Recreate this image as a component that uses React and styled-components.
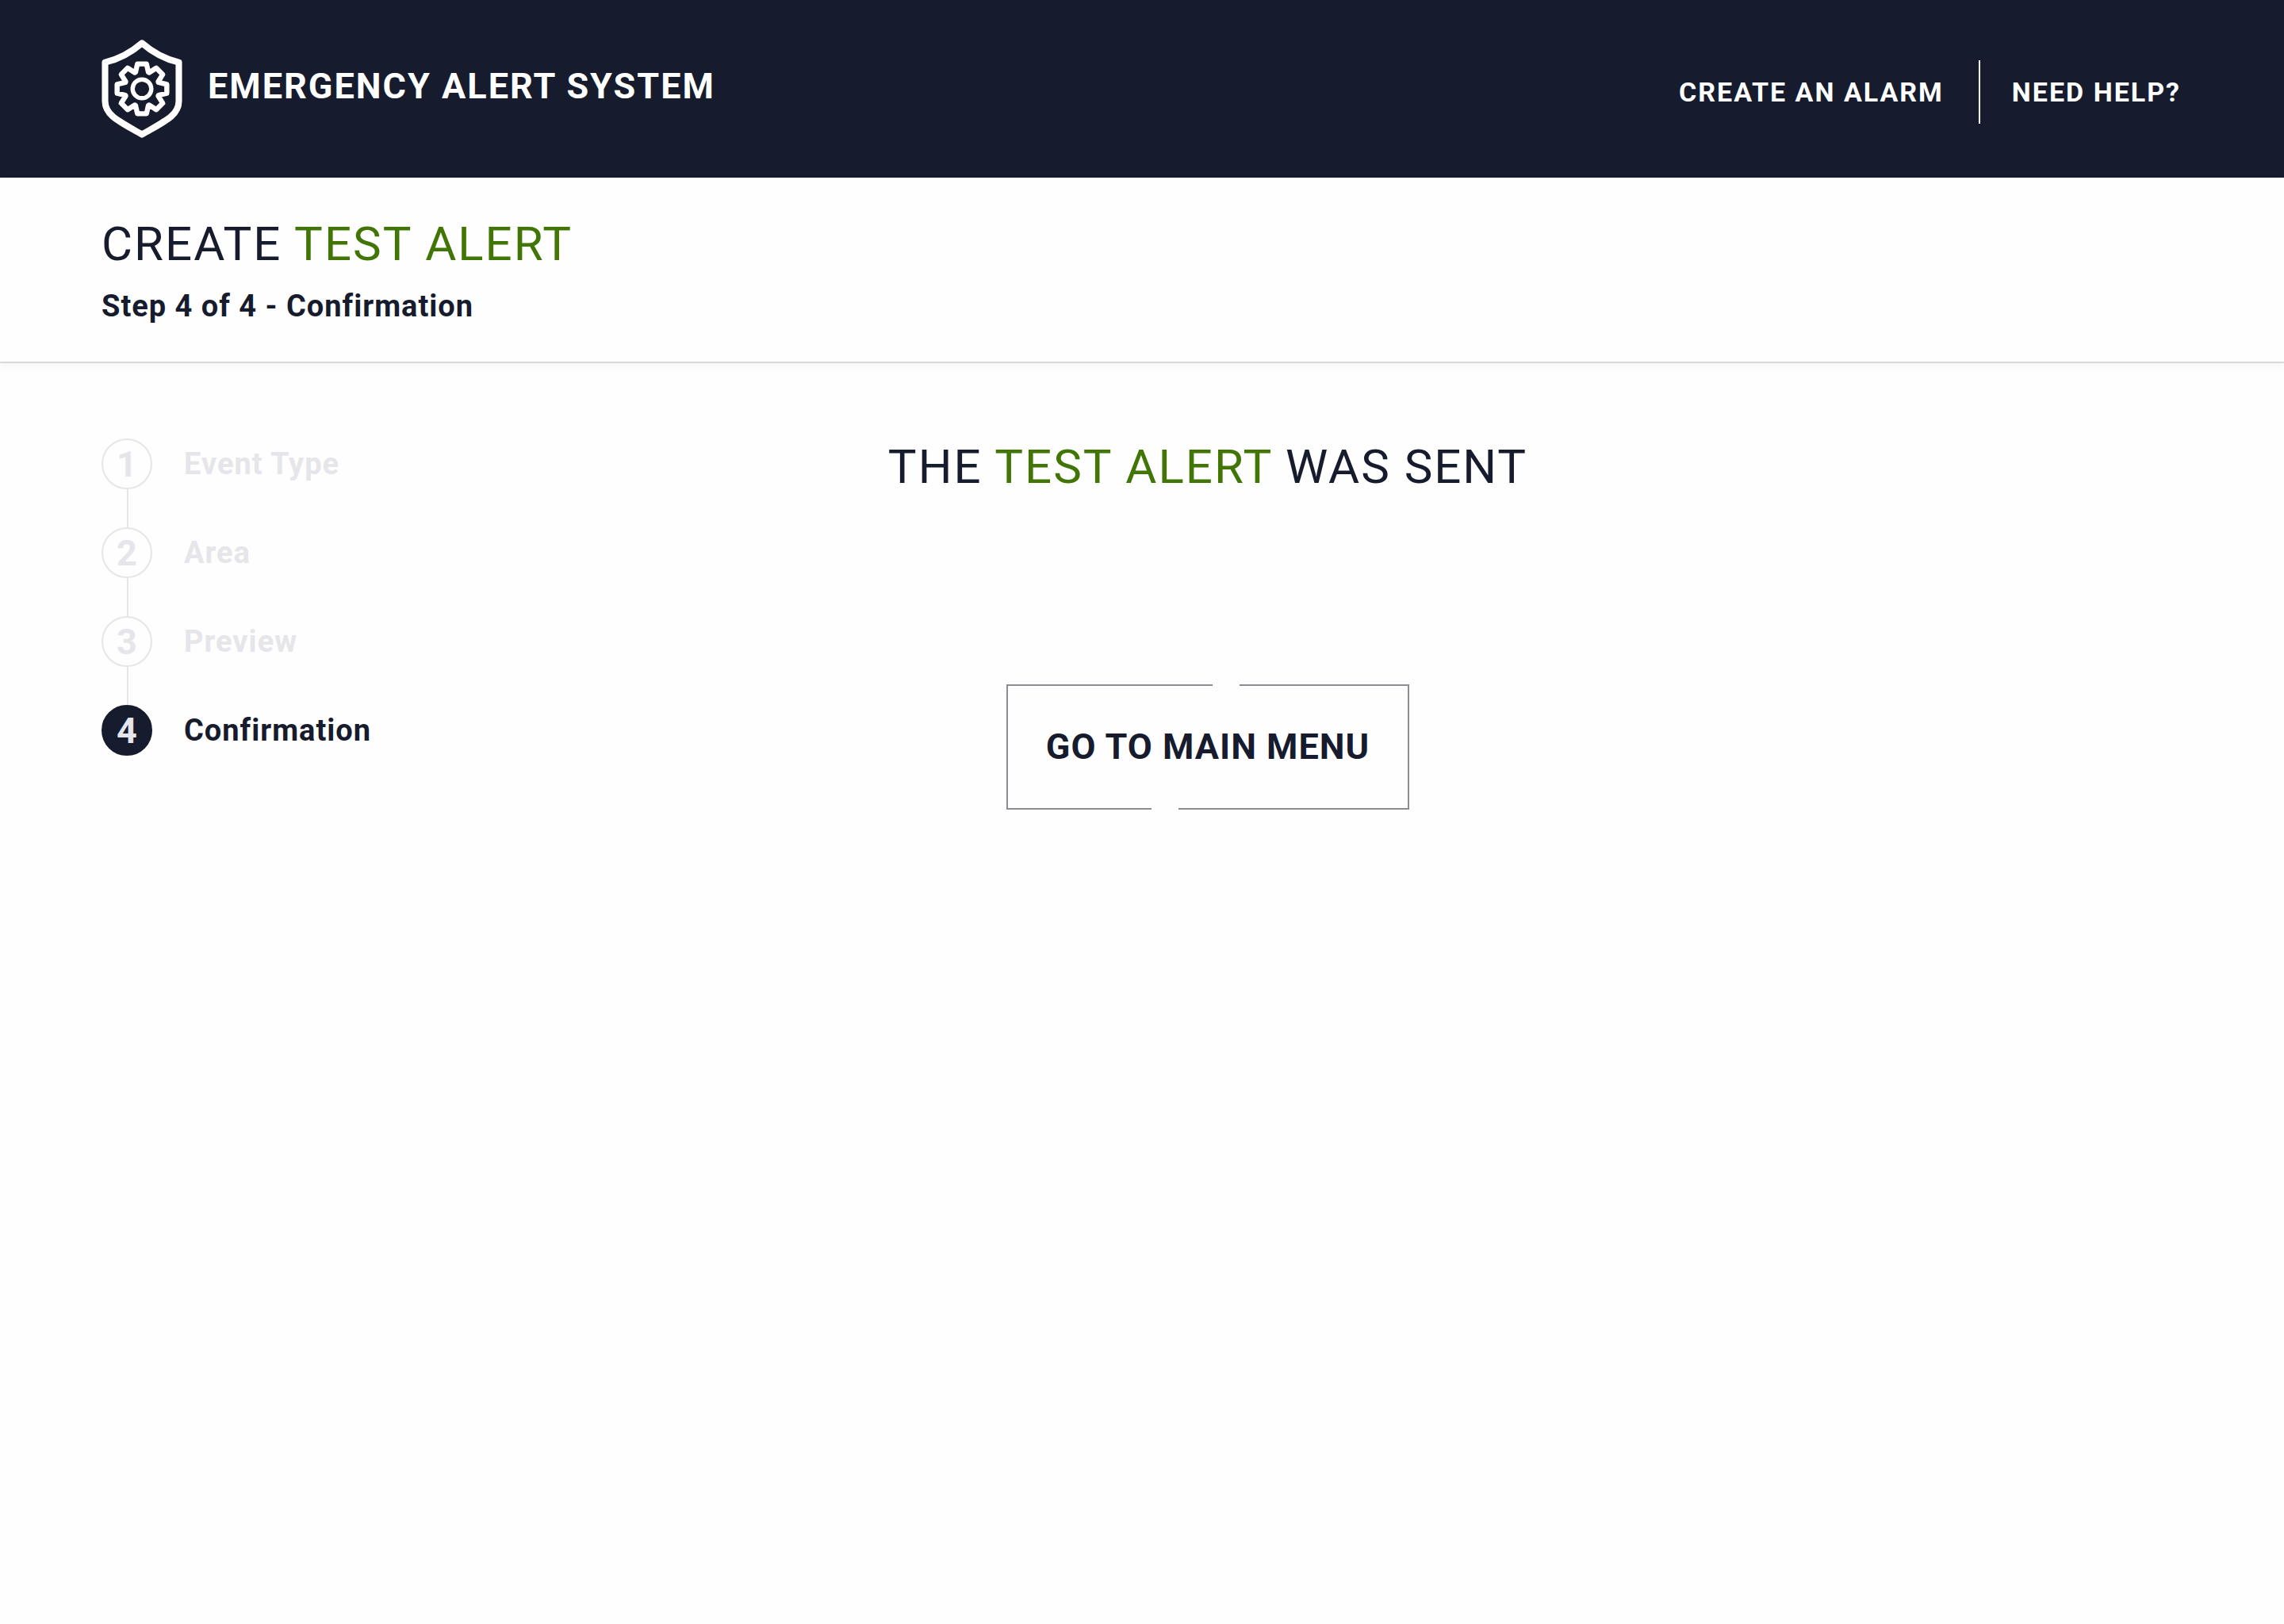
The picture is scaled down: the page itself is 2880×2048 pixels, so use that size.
import React from 'react';
import styled, { createGlobalStyle } from 'styled-components';

const colors = {
    navy: "#161c2d",
    green: "#417505",
    faded: "#e5e5ea",
    rule: "#d8d8d8",
    outline: "#8a8d96"
};

const steps = ["Event Type", "Area", "Preview", "Confirmation"];

// one tooth as [offset from its axis, distance from the centre]
const tooth = [[-24, 62], [-17, 93], [17, 93], [24, 62]];

const gearPoints = [0, 1, 2, 3, 4, 5, 6, 7].flatMap(i => {
    const a = i * Math.PI / 4;
    return tooth.map(([x, r]) => {
        const px = 150 + x * Math.cos(a) + r * Math.sin(a);
        const py = 184 + x * Math.sin(a) - r * Math.cos(a);
        return `${px.toFixed(1)},${py.toFixed(1)}`;
    });
}).join(" ");

const Logo = () => (
    <LogoSvg viewBox="0 0 300 368" aria-hidden="true">
        <path
            d="M150 13 C112 46 68 72 12 85 V230 C12 284 66 306 150 355 C234 306 288 284 288 230 V85 C232 72 188 46 150 13 Z"
            strokeWidth="24"
        />
        <polygon points={gearPoints} strokeWidth="19" />
        <circle cx="150" cy="184" r="35" strokeWidth="16" />
    </LogoSvg>
);

export default class App extends React.Component {
    render() {
        return (
            <Page>
                <GlobalStyle />
                <Header>
                    <Brand>
                        <Logo />
                        <BrandName>EMERGENCY ALERT SYSTEM</BrandName>
                    </Brand>
                    <Nav>
                        <NavLink href="#create">CREATE AN ALARM</NavLink>
                        <NavLink href="#help">NEED HELP?</NavLink>
                    </Nav>
                </Header>
                <TitleBar>
                    <Title>CREATE <Green>TEST ALERT</Green></Title>
                    <Subtitle>Step 4 of 4 - Confirmation</Subtitle>
                </TitleBar>
                <Content>
                    <Steps>
                        {steps.map((name, i) => (
                            <Step key={name} $active={i === 3}>
                                <StepNumber $active={i === 3}>{i + 1}</StepNumber>
                                {name}
                            </Step>
                        ))}
                    </Steps>
                    <Main>
                        <Title as="h2">THE <Green>TEST ALERT</Green> WAS SENT</Title>
                        <MenuButton type="button">GO TO MAIN MENU</MenuButton>
                    </Main>
                </Content>
            </Page>
        );
    }
};

const GlobalStyle = createGlobalStyle`
    * {
        box-sizing: border-box;
    }
    body {
        margin: 0;
        background-color: #fefefe;
        color: ${colors.navy};
        font-family: Roboto, "Liberation Sans", sans-serif;
    }
`;

const Page = styled("div")`
    min-height: 100vh;
`;

const Header = styled("header")`
    background-color: ${colors.navy};
    color: white;
    height: 224px;
    padding: 0 130px 0 128px;
    display: flex;
    justify-content: space-between;
    align-items: center;
`;

const Brand = styled("div")`
    display: flex;
    align-items: center;
    gap: 32px;
`;

const LogoSvg = styled("svg")`
    width: 102px;
    height: 124px;
    fill: none;
    stroke: white;
    stroke-linejoin: round;
`;

const BrandName = styled("span")`
    font-size: 45px;
    line-height: 56px;
    font-weight: 700;
    letter-spacing: 2px;
    padding-bottom: 6px;
`;

const Nav = styled("nav")`
    display: flex;
    padding-top: 8px;
`;

const NavLink = styled("a")`
    color: white;
    text-decoration: none;
    font-size: 34px;
    line-height: 80px;
    font-weight: 700;
    letter-spacing: 2px;

    & + & {
        border-left: 2px solid white;
        margin-left: 44px;
        padding-left: 40px;
    }
`;

const TitleBar = styled("div")`
    background-color: #fefefe;
    border-bottom: 2px solid ${colors.rule};
    box-shadow: 0 4px 10px rgba(0, 0, 0, 0.04);
    padding: 48px 128px 42px;
`;

const Title = styled("h1")`
    margin: 0;
    font-size: 60px;
    line-height: 72px;
    font-weight: 400;
    letter-spacing: 2px;
`;

const Green = styled("span")`
    color: ${colors.green};
`;

const Subtitle = styled("p")`
    margin: 14px 0 0;
    font-size: 38px;
    line-height: 56px;
    font-weight: 700;
    letter-spacing: 1px;
`;

const Content = styled("div")`
    display: grid;
    grid-template-columns: 480px 1fr 314px;
    padding: 95px 128px;
`;

const Steps = styled("ol")`
    list-style: none;
    margin: 0;
    padding: 0;
    display: flex;
    flex-direction: column;
    gap: 48px;
`;

const Step = styled("li")`
    position: relative;
    display: flex;
    align-items: center;
    gap: 40px;
    height: 64px;
    color: ${props => props.$active ? colors.navy : colors.faded};
    font-size: 38px;
    font-weight: 700;
    letter-spacing: 1px;

    &:not(:first-child)::before {
        content: "";
        position: absolute;
        left: 32px;
        bottom: 100%;
        width: 2px;
        height: 48px;
        background-color: ${colors.faded};
    }
`;

const StepNumber = styled("span")`
    width: 64px;
    height: 64px;
    border: 2px solid ${props => props.$active ? colors.navy : colors.faded};
    border-radius: 50%;
    background-color: ${props => props.$active ? colors.navy : "transparent"};
    color: ${colors.faded};
    display: flex;
    justify-content: center;
    align-items: center;
    font-size: 45px;
    font-weight: 700;
    letter-spacing: 0;
`;

const Main = styled("main")`
    display: flex;
    flex-direction: column;
    align-items: center;
    gap: 238px;
`;

const MenuButton = styled("button")`
    position: relative;
    border: 2px solid ${colors.outline};
    background-color: transparent;
    color: ${colors.navy};
    padding: 50px 48px;
    font-family: inherit;
    font-size: 45px;
    line-height: 54px;
    font-weight: 700;
    letter-spacing: 1px;
    cursor: pointer;

    /* gaps in the outline */
    &::before,
    &::after {
        content: "";
        position: absolute;
        width: 34px;
        height: 2px;
        background-color: #fefefe;
    }
    &::before {
        top: -2px;
        right: 42%;
    }
    &::after {
        bottom: -2px;
        left: 36%;
    }
`;
